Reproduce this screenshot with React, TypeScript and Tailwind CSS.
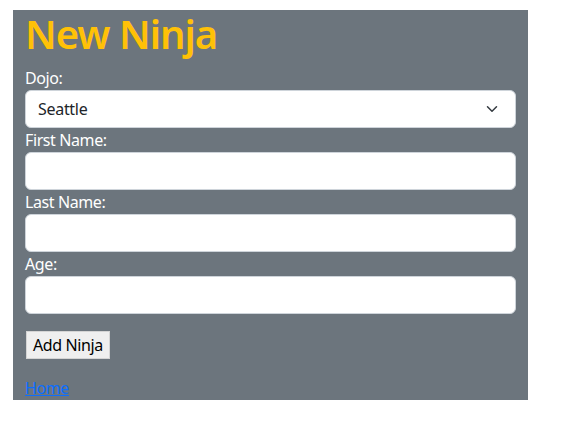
import React from 'react';

const font = { fontFamily: '"Noto Sans", "Segoe UI", sans-serif' };

const Field: React.FC<{ label: string }> = ({ label }) => (
  <div>
    <label className="block text-base leading-6 text-white tracking-[-0.4px]">{label}</label>
    <input
      type="text"
      className="block h-[38px] w-full rounded-[6px] border border-[#ced4da] bg-white px-3 text-base text-[#212529] outline-none"
    />
  </div>
);

export default function App() {
  return (
    <div className="bg-white min-h-[421px]" style={font}>
      <div className="ml-[13px] pt-[10px] w-[515px]">
        <div className="bg-[#6c757d] px-3">
          <h1 className="text-[40px] leading-[48px] font-semibold text-[#ffc107] mb-2 tracking-[-1px]">New Ninja</h1>
          <div>
            <label className="block text-base leading-6 text-white tracking-[-0.4px]">Dojo:</label>
            <div className="relative">
              <select
                defaultValue="Seattle"
                className="block h-[38px] w-full appearance-none rounded-[6px] border border-[#ced4da] bg-white pl-3 pr-9 text-base text-[#212529] outline-none tracking-[-0.3px]"
              >
                <option>Seattle</option>
                <option>Chicago</option>
                <option>Burbank</option>
              </select>
              <svg
                className="pointer-events-none absolute right-[17px] top-[13px]"
                width="14"
                height="12"
                viewBox="0 0 16 16"
                fill="none"
                stroke="#343a40"
                strokeWidth="2"
                strokeLinecap="round"
                strokeLinejoin="round"
              >
                <path d="m2 5 6 6 6-6" />
              </svg>
            </div>
          </div>
          <Field label="First Name:" />
          <Field label="Last Name:" />
          <Field label="Age:" />
          <div className="mt-[17px]">
            <button className="h-[28px] px-[6px] bg-[#efefef] border border-[#d4d4d4] text-base text-black ml-px tracking-[-0.4px]">
              Add Ninja
            </button>
          </div>
          <div className="mt-[17px] pb-0 leading-6">
            <a href="#" className="text-[#0d6efd] underline text-base tracking-[-0.4px]">Home</a>
          </div>
        </div>
      </div>
    </div>
  );
}
